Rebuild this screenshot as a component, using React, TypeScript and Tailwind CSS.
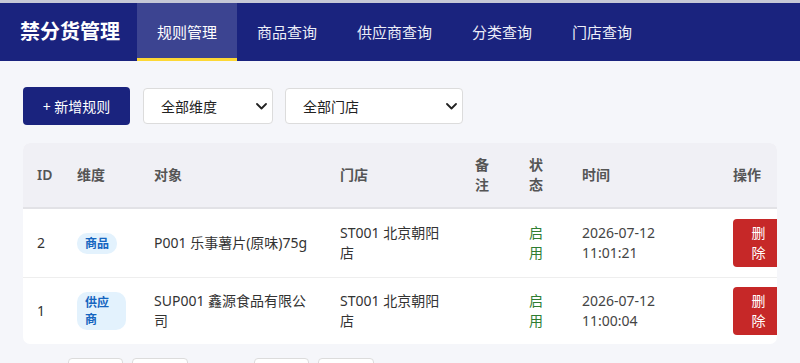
import React from "react";

const font = { fontFamily: '"Noto Sans", "Noto Sans CJK SC", sans-serif' };

function Chevron() {
  return (
    <svg width="11" height="7" viewBox="0 0 11 7" className="shrink-0">
      <polyline points="1,1 5.5,5.5 10,1" fill="none" stroke="#222" strokeWidth="1.8" strokeLinecap="round" strokeLinejoin="round" />
    </svg>
  );
}

const cols = "grid grid-cols-[40px_77px_186px_135px_54px_53px_151px_78px]";

type Row = {
  id: string;
  dim: string;
  obj: string;
  store: string;
  note: string;
  status: string;
  time: string;
};

const rows: Row[] = [
  { id: "2", dim: "商品", obj: "P001 乐事薯片(原味)75g", store: "ST001 北京朝阳店", note: "", status: "启用", time: "2026-07-12 11:01:21" },
  { id: "1", dim: "供应商", obj: "SUP001 鑫源食品有限公司", store: "ST001 北京朝阳店", note: "", status: "启用", time: "2026-07-12 11:00:04" },
];

export default function App() {
  const tabs = ["规则管理", "商品查询", "供应商查询", "分类查询", "门店查询"];
  return (
    <div className="min-h-[363px] bg-[#f5f6fa] text-[#333]" style={font}>
      <div className="h-[3px] bg-[#c6c8d6]" />
      <header className="flex h-[58px] items-stretch bg-[#1a237e]">
        <div className="ml-5 mr-[17px] flex items-center text-[20px] font-bold text-white">禁分货管理</div>
        {tabs.map((t, i) => (
          <div
            key={t}
            className={
              i === 0
                ? "flex items-center border-b-[3px] border-[#fdd835] bg-[#3c4491] px-5 pt-[3px] text-[15px] text-white"
                : "flex items-center border-b-[3px] border-transparent px-5 pt-[3px] text-[15px] text-[#eceef8]"
            }
          >
            {t}
          </div>
        ))}
      </header>

      <main className="px-[23px] pt-[26px]">
        <div className="flex items-center">
          <button className="flex h-[38px] w-[107px] items-center justify-center rounded-[4px] bg-[#1a237e] text-[14px] text-white">
            + 新增规则
          </button>
          <div className="ml-[13px] flex h-[36px] w-[130px] items-center justify-between rounded-[4px] border border-[#dcdcdc] bg-white pl-[17px] pr-[5px] text-[14px] text-[#222]">
            <span>全部维度</span>
            <Chevron />
          </div>
          <div className="ml-[12px] flex h-[36px] w-[178px] items-center justify-between rounded-[4px] border border-[#dcdcdc] bg-white pl-[17px] pr-[5px] text-[14px] text-[#222]">
            <span>全部门店</span>
            <Chevron />
          </div>
        </div>

        <div className="mt-[18px] overflow-hidden rounded-[7px] bg-white">
          <div className={`${cols} items-center border-b-2 border-[#e2e2e6] bg-[#f0f0f5] text-[14px] font-semibold leading-5 text-[#555]`}>
            {["ID", "维度", "对象", "门店", "备注", "状态", "时间", "操作"].map((h) => (
              <div key={h} className="px-[14px] py-[12px]">
                {h}
              </div>
            ))}
          </div>
          {rows.map((r, idx) => {
            const pad = idx === 0 ? "px-[14px] py-[10px]" : "px-[14px] py-[9px]";
            return (
              <div
                key={r.id}
                className={`${cols} items-center text-[14px] leading-5 ${idx === 0 ? "border-b border-[#eeeeee]" : ""}`}
              >
                <div className={pad}>{r.id}</div>
                <div className={pad}>
                  <span className="inline-block rounded-[10px] bg-[#e3f2fd] px-2 py-[2px] text-[12px] font-semibold leading-[17px] text-[#1565c0]">
                    {r.dim}
                  </span>
                </div>
                <div className={pad}>{r.obj}</div>
                <div className={pad}>{r.store}</div>
                <div className={pad}>{r.note}</div>
                <div className={`${pad} text-[#2e7d32]`}>{r.status}</div>
                <div className={`${pad} text-[#444]`}>{r.time}</div>
                <div className={pad}>
                  <button className="block w-[51px] rounded-[4px] bg-[#c62828] px-3 py-[4px] text-[14px] leading-5 text-white">
                    删除
                  </button>
                </div>
              </div>
            );
          })}
        </div>

        <div className="mt-[14px] flex items-center">
          <div className="w-[45px]" />
          <div className="h-8 w-[55px] rounded-[4px] border border-[#dcdcdc] bg-white" />
          <div className="ml-[9px] h-8 w-[56px] rounded-[4px] border border-[#dcdcdc] bg-white" />
          <div className="w-[66px]" />
          <div className="h-8 w-[55px] rounded-[4px] border border-[#dcdcdc] bg-white" />
          <div className="ml-[9px] h-8 w-[56px] rounded-[4px] border border-[#dcdcdc] bg-white" />
        </div>
      </main>
    </div>
  );
}
